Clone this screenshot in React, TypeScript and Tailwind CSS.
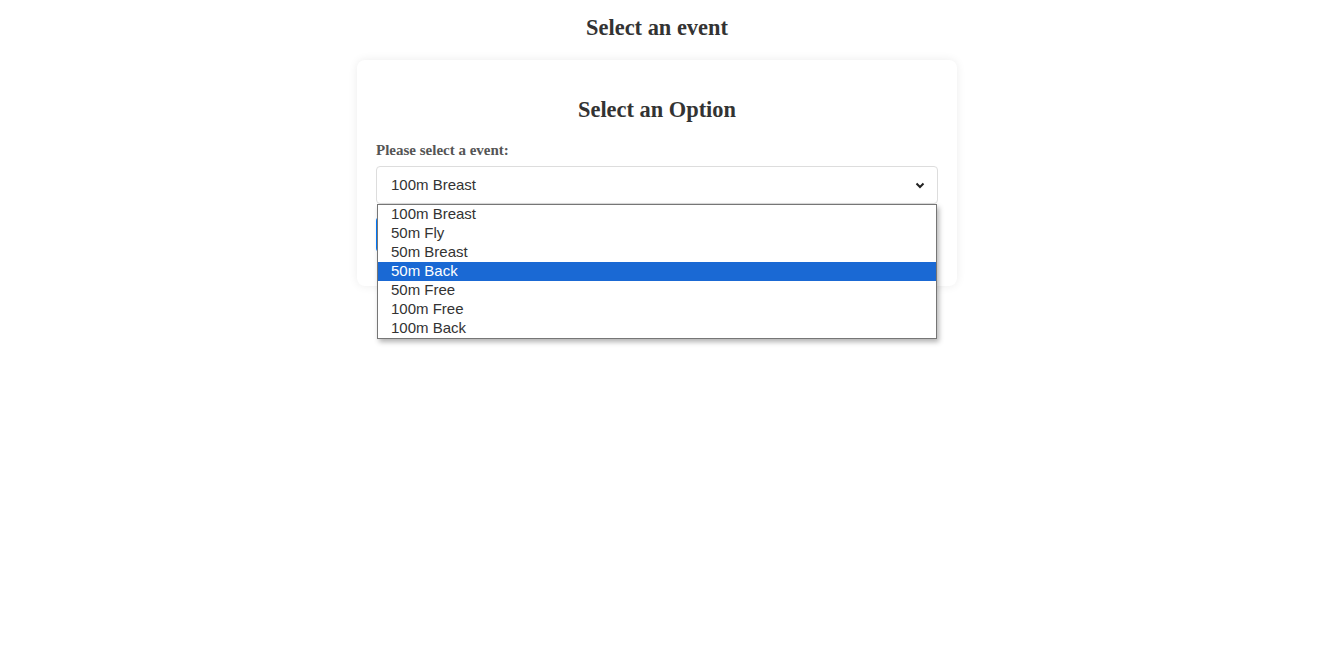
const events = ['100m Breast', '50m Fly', '50m Breast', '50m Back', '50m Free', '100m Free', '100m Back']

function App() {
  const selected = '50m Back'

  return (
    <div className="min-h-screen w-[1314px] bg-white text-[#333]" style={{ fontFamily: '"Liberation Serif", serif' }}>
      <h1 className="mt-[15px] text-center text-[22.4px] font-bold leading-[26px]">Select an event</h1>

      <div className="mx-auto mt-[19px] w-[600px] rounded-lg bg-white px-[19px] pt-[20px] pb-[34px] shadow-[0_0_10px_rgba(0,0,0,0.08)]">
        <h2 className="mt-[17px] text-center text-[22.4px] font-bold leading-[26px]">Select an Option</h2>

        <label className="mt-[19px] block text-[15px] font-bold leading-[17px] text-[#555]">Please select a event:</label>

        <div className="relative mt-[7px]">
          <div
            className="flex h-[38px] items-center justify-between rounded border border-[#ddd] bg-white pr-[12px] pl-[14px] text-[15px] text-[#333]"
            style={{ fontFamily: '"Liberation Sans", Arial, sans-serif' }}
          >
            <span>100m Breast</span>
            <svg width="10" height="7" viewBox="0 0 10 7" className="text-[#222]">
              <path d="M1.5 1.5 L5 5 L8.5 1.5" fill="none" stroke="currentColor" strokeWidth="2" />
            </svg>
          </div>

          {/* open option list */}
          <div
            className="absolute top-[38px] left-[1px] z-10 w-[560px] border border-[#767676] bg-white shadow-[2px_3px_5px_rgba(0,0,0,0.3)]"
            style={{ fontFamily: '"Liberation Sans", Arial, sans-serif' }}
          >
            {events.map((ev) => (
              <div
                key={ev}
                className={
                  ev === selected
                    ? 'h-[19px] bg-[#1a69d4] pl-[13px] text-[15px] leading-[17px] text-white'
                    : 'h-[19px] pl-[13px] text-[15px] leading-[17px] text-[#333]'
                }
              >
                {ev}
              </div>
            ))}
          </div>
        </div>

        <button className="mt-[13px] h-[35px] rounded bg-[#007bff] px-5 text-[15px] text-white">Submit</button>
      </div>
    </div>
  )
}

export default App
